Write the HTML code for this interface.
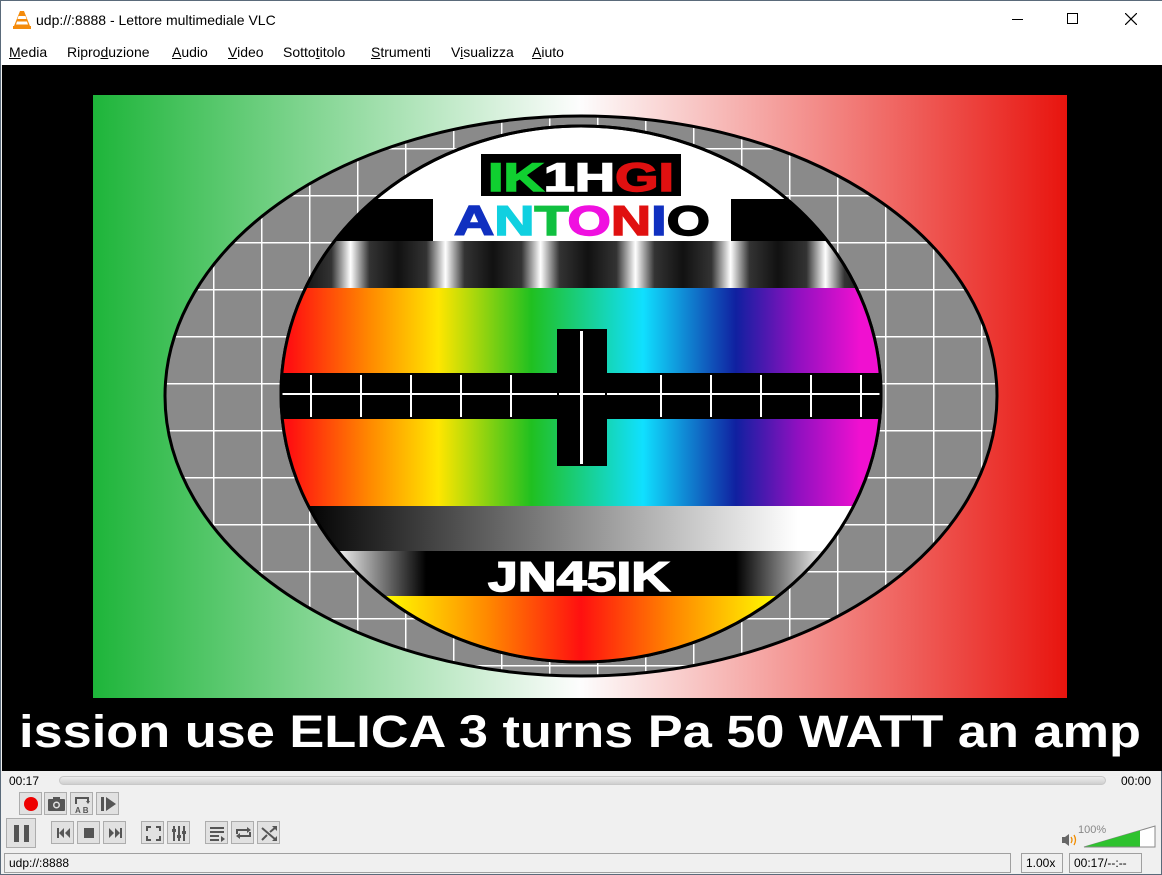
<!DOCTYPE html>
<html><head><meta charset="utf-8"><style>
*{margin:0;padding:0;box-sizing:border-box}
body{width:1162px;height:875px;overflow:hidden;background:#f0f0f0;font-family:"Liberation Sans",sans-serif;position:relative;border:1px solid #5a6a7a}
.abs{position:absolute}
.title{left:0;top:0;width:1162px;height:38px;background:#fff}
.menu{left:0;top:38px;width:1162px;height:26px;background:#fff;font-size:14px;color:#000}
.menu span{position:absolute;top:5px}
.video{left:1px;top:64px;width:1160px;height:706px;background:#000}
.btn{position:absolute;width:23px;height:23px;border:1px solid #adadad;background:#e1e1e1}
.btn svg{position:absolute;left:0;top:0}
.field{position:absolute;top:852px;height:20px;border:1px solid #a0a0a0;background:#f0f0f0;font-size:12px;padding:2px 4px}
</style></head><body>
<div class="abs title">
<svg class="abs" style="left:12px;top:9px" width="18" height="20" viewBox="0 0 18 20"><path d="M7 1h4l6 15H1z" fill="#f48b0b"/><path d="M5.5 6h7l1 3h-9zM4 11.5h10l1 3H3z" fill="#fff"/><rect x="0" y="16" width="18" height="3" fill="#f48b0b"/></svg>
<div class="abs" style="left:35px;top:11px;font-size:14px">udp://:8888 - Lettore multimediale VLC</div>
<div class="abs" style="left:1011px;top:18px;width:11px;height:1px;background:#000"></div>
<div class="abs" style="left:1066px;top:12px;width:11px;height:11px;border:1px solid #000"></div>
<svg class="abs" style="left:1124px;top:12px" width="12" height="12"><path d="M0 0L12 12M12 0L0 12" stroke="#000" stroke-width="1.2"/></svg>
</div>
<div class="abs menu">
<span style="left:8px"><u>M</u>edia</span><span style="left:66px">Ripro<u>d</u>uzione</span><span style="left:171px"><u>A</u>udio</span><span style="left:227px"><u>V</u>ideo</span><span style="left:282px">Sotto<u>t</u>itolo</span><span style="left:370px"><u>S</u>trumenti</span><span style="left:450px">V<u>i</u>sualizza</span><span style="left:531px"><u>A</u>iuto</span>
</div>
<div class="abs video">
<svg width="1160" height="706" viewBox="1 64 1160 706">
<defs>
<linearGradient id="flag" x1="0" x2="1"><stop offset="0" stop-color="#1eb53a"/><stop offset="0.5" stop-color="#fdfdfd"/><stop offset="1" stop-color="#e8140e"/></linearGradient>
<linearGradient id="rb" x1="0" x2="1"><stop offset="0.03" stop-color="#ff1010"/><stop offset="0.16" stop-color="#ff8a00"/><stop offset="0.27" stop-color="#ffe600"/><stop offset="0.42" stop-color="#20c020"/><stop offset="0.6" stop-color="#10e0ff"/><stop offset="0.75" stop-color="#1020a0"/><stop offset="0.85" stop-color="#9010c0"/><stop offset="0.95" stop-color="#f010d0"/></linearGradient>
<linearGradient id="rb2" x1="0" x2="1"><stop offset="0.18" stop-color="#ffff00"/><stop offset="0.35" stop-color="#ff8800"/><stop offset="0.5" stop-color="#ff1010"/><stop offset="0.65" stop-color="#ff8800"/><stop offset="0.82" stop-color="#ffff00"/></linearGradient>
<linearGradient id="gr" x1="0" x2="1"><stop offset="0.05" stop-color="#000"/><stop offset="0.85" stop-color="#fff"/></linearGradient>
<linearGradient id="gr2" x1="0" x2="1"><stop offset="0.1" stop-color="#fff"/><stop offset="0.25" stop-color="#000"/><stop offset="0.75" stop-color="#000"/><stop offset="0.9" stop-color="#fff"/></linearGradient>
<linearGradient id="sg" x1="0" x2="1"><stop offset="0" stop-color="#111"/><stop offset="0.3" stop-color="#333"/><stop offset="0.5" stop-color="#fff"/><stop offset="0.7" stop-color="#333"/><stop offset="1" stop-color="#111"/></linearGradient>
<pattern id="stripes" x="302" width="95" height="50" patternUnits="userSpaceOnUse"><rect width="95" height="50" fill="url(#sg)"/></pattern>
<pattern id="grid" x="164" y="100" width="48" height="47" patternUnits="userSpaceOnUse"><rect width="48" height="47" fill="#8a8a8a"/><path d="M0 0H48M0 0V47" stroke="#fff" stroke-width="3"/></pattern>
<clipPath id="ic"><ellipse cx="580" cy="393" rx="300" ry="268"/></clipPath>
</defs>
<rect x="92" y="94" width="974" height="603" fill="url(#flag)"/>
<ellipse cx="580" cy="395" rx="416" ry="280" fill="url(#grid)" stroke="#000" stroke-width="3"/>
<ellipse cx="580" cy="393" rx="300" ry="268" fill="#fff" stroke="#000" stroke-width="3"/>
<g clip-path="url(#ic)">
<rect x="270" y="198" width="620" height="44" fill="#000"/>
<rect x="432" y="198" width="298" height="44" fill="#fff"/>
<rect x="270" y="240" width="620" height="47" fill="url(#stripes)"/>
<rect x="270" y="287" width="620" height="85" fill="url(#rb)"/>
<rect x="270" y="372" width="620" height="46" fill="#000"/>
<g stroke="#fff" stroke-width="2"><path d="M280 393H880"/><path d="M310 374v42M360 374v42M410 374v42M460 374v42M510 374v42M660 374v42M710 374v42M760 374v42M810 374v42M860 374v42"/></g>
<rect x="270" y="418" width="620" height="87" fill="url(#rb)"/>
<rect x="270" y="505" width="620" height="45" fill="url(#gr)"/>
<rect x="270" y="550" width="620" height="45" fill="url(#gr2)"/>
<rect x="270" y="595" width="620" height="70" fill="url(#rb2)"/>
</g>
<ellipse cx="580" cy="393" rx="300" ry="268" fill="none" stroke="#000" stroke-width="3"/>
<rect x="556" y="328" width="50" height="137" fill="#000"/><rect x="579" y="330" width="3" height="133" fill="#fff"/><rect x="558" y="392" width="46" height="2" fill="#fff"/>
<rect x="480" y="153" width="200" height="42" fill="#000"/>
<text x="580" y="190" text-anchor="middle" font-family="Liberation Sans" font-weight="bold" font-size="40" stroke-width="1.5" textLength="186" lengthAdjust="spacingAndGlyphs"><tspan fill="#10d030" stroke="#10d030">IK</tspan><tspan fill="#fff" stroke="#fff">1H</tspan><tspan fill="#e01010" stroke="#e01010">GI</tspan></text>
<text x="581" y="234" text-anchor="middle" font-family="Liberation Sans" font-weight="bold" font-size="42" stroke-width="1.5" textLength="256" lengthAdjust="spacingAndGlyphs"><tspan fill="#1030c0" stroke="#1030c0">A</tspan><tspan fill="#10d0e0" stroke="#10d0e0">N</tspan><tspan fill="#10c040" stroke="#10c040">T</tspan><tspan fill="#f010e0" stroke="#f010e0">O</tspan><tspan fill="#e01010" stroke="#e01010">N</tspan><tspan fill="#1030c0" stroke="#1030c0">I</tspan><tspan fill="#000" stroke="#000">O</tspan></text>
<text x="578" y="590" text-anchor="middle" font-family="Liberation Sans" font-weight="bold" font-size="42" fill="#fff" stroke="#fff" stroke-width="1.5" textLength="182" lengthAdjust="spacingAndGlyphs">JN45IK</text>
<text x="18" y="746" font-family="Liberation Sans" font-weight="bold" font-size="45" fill="#fff" textLength="1122" lengthAdjust="spacingAndGlyphs">ission use ELICA 3 turns Pa 50 WATT an amp</text>
</svg>
</div>
<div class="abs" style="left:8px;top:773px;font-size:12px">00:17</div>
<div class="abs" style="left:58px;top:775px;width:1047px;height:9px;border-radius:5px;background:linear-gradient(#ededed,#cfcfcf);border:1px solid #c8c8c8"></div>
<div class="abs" style="left:1120px;top:773px;font-size:12px">00:00</div>
<div class="btn" style="left:18px;top:791px"><svg width="23" height="23"><circle cx="11" cy="11" r="7" fill="#ee0000"/></svg></div>
<div class="btn" style="left:43px;top:791px"><svg width="23" height="23"><rect x="3" y="6" width="17" height="12" rx="1" fill="#555"/><rect x="8" y="4" width="7" height="3" fill="#555"/><circle cx="11.5" cy="12" r="3.5" fill="#e1e1e1"/><circle cx="11.5" cy="12" r="2" fill="#555"/></svg></div>
<div class="btn" style="left:69px;top:791px"><svg width="23" height="23"><path d="M5 11V5h12v4" stroke="#555" stroke-width="2" fill="none"/><path d="M15 8l2 3 2-3z" fill="#555"/><text x="4" y="20" font-size="8" font-weight="bold" fill="#555" font-family="Liberation Sans">A B</text></svg></div>
<div class="btn" style="left:95px;top:791px"><svg width="23" height="23"><rect x="4" y="4" width="3" height="14" fill="#555"/><path d="M9 4l10 7-10 7z" fill="#555"/></svg></div>
<div class="btn" style="left:5px;top:817px;width:30px;height:30px"><svg width="30" height="30"><rect x="7" y="6" width="5" height="17" fill="#555"/><rect x="17" y="6" width="5" height="17" fill="#555"/></svg></div>
<div class="btn" style="left:50px;top:820px"><svg width="23" height="23"><rect x="5" y="6" width="2" height="10" fill="#555"/><path d="M12 6v10l-5-5zM18 6v10l-5-5z" fill="#555"/></svg></div>
<div class="btn" style="left:76px;top:820px"><svg width="23" height="23"><rect x="6" y="6" width="10" height="10" fill="#555"/></svg></div>
<div class="btn" style="left:102px;top:820px"><svg width="23" height="23"><path d="M5 6v10l5-5zM11 6v10l5-5z" fill="#555"/><rect x="16" y="6" width="2" height="10" fill="#555"/></svg></div>
<div class="btn" style="left:140px;top:820px"><svg width="23" height="23"><path d="M5 9V5h4M14 5h4v4M18 14v4h-4M9 18H5v-4" stroke="#555" stroke-width="2" fill="none"/></svg></div>
<div class="btn" style="left:166px;top:820px"><svg width="23" height="23"><path d="M6 4v15M11 4v15M16 4v15" stroke="#555" stroke-width="2"/><rect x="4" y="7" width="4" height="3" fill="#555"/><rect x="9" y="13" width="4" height="3" fill="#555"/><rect x="14" y="9" width="4" height="3" fill="#555"/></svg></div>
<div class="btn" style="left:204px;top:820px"><svg width="23" height="23"><path d="M4 6h14M4 10h14M4 14h9M4 18h9" stroke="#555" stroke-width="2"/><path d="M15 14l4 3-4 3z" fill="#555"/></svg></div>
<div class="btn" style="left:230px;top:820px"><svg width="23" height="23"><path d="M5 12V8h11M18 10v4H7" stroke="#555" stroke-width="2" fill="none"/><path d="M15 5l4 3-4 3zM8 11l-4 3 4 3z" fill="#555"/></svg></div>
<div class="btn" style="left:256px;top:820px"><svg width="23" height="23"><path d="M4 6l14 12M4 18l5-5M12 10l6-5" stroke="#555" stroke-width="2"/><path d="M14 4h5v5zM14 19h5v-5z" fill="#555"/></svg></div>
<svg class="abs" style="left:1060px;top:832px" width="20" height="14"><rect x="1" y="4" width="3" height="6" fill="#666"/><path d="M4 4l4-3v12l-4-3z" fill="#666"/><path d="M10 4q2 3 0 6M13 2q3 5 0 10" stroke="#f08c00" stroke-width="1.3" fill="none"/></svg>
<div class="abs" style="left:1077px;top:823px;font-size:11px;color:#888">100%</div>
<svg class="abs" style="left:1082px;top:824px" width="74" height="24"><path d="M1 22L72 1V22z" fill="#fff" stroke="#888"/><path d="M2 21.5L57 5.5V21.5z" fill="#2ec22e"/></svg>
<div class="field" style="left:3px;width:1007px">udp://:8888</div>
<div class="field" style="left:1020px;width:42px">1.00x</div>
<div class="field" style="left:1068px;width:73px">00:17/--:--</div>
</body></html>
